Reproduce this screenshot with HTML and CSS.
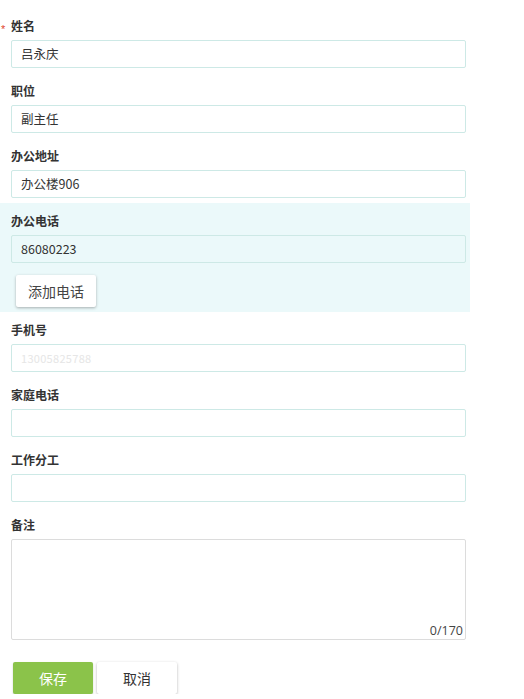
FILE: index.html
```html
<!DOCTYPE html>
<html>
<head>
<meta charset="utf-8">
<link rel="stylesheet" href="styles.css">
</head>
<body>
<form class="form">
  <div class="field">
    <label class="label required">姓名</label>
    <div class="input">吕永庆</div>
  </div>
  <div class="field">
    <label class="label">职位</label>
    <div class="input">副主任</div>
  </div>
  <div class="field">
    <label class="label">办公地址</label>
    <div class="input">办公楼906</div>
  </div>
  <div class="panel">
    <label class="label">办公电话</label>
    <div class="input input-panel">86080223</div>
    <button type="button" class="btn btn-add">添加电话</button>
  </div>
  <div class="field">
    <label class="label">手机号</label>
    <div class="input input-blur">13005825788</div>
  </div>
  <div class="field">
    <label class="label">家庭电话</label>
    <div class="input"></div>
  </div>
  <div class="field">
    <label class="label">工作分工</label>
    <div class="input"></div>
  </div>
  <div class="field">
    <label class="label">备注</label>
    <div class="textarea-wrap">
      <div class="textarea"></div>
      <span class="counter">0/170</span>
    </div>
  </div>
  <div class="actions">
    <button type="button" class="btn btn-save">保存</button>
    <button type="button" class="btn btn-cancel">取消</button>
  </div>
</form>
</body>
</html>
```
FILE: styles.css
```css
* { box-sizing: border-box; }
body {
  margin: 0;
  background: #fff;
  font-family: "Noto Sans CJK SC", "Noto Sans", sans-serif;
  color: #333;
}
.form {
  width: 470px;
  padding-top: 17px;
  display: flex;
  flex-direction: column;
}
.field {
  display: flex;
  flex-direction: column;
  padding: 0 4px 14px 11px;
}
.label {
  position: relative;
  display: block;
  height: 18px;
  line-height: 18px;
  font-size: 12px;
  font-weight: bold;
  color: #333;
  margin-bottom: 5px;
}
.required::before {
  content: "*";
  position: absolute;
  left: -10px;
  top: 3px;
  color: #e0442e;
  font-size: 11px;
  font-weight: normal;
  font-family: "Liberation Sans", sans-serif;
}
.input {
  height: 28px;
  border: 1px solid #cde9e6;
  border-radius: 2px;
  background: #fff;
  padding: 0 9px;
  font-size: 12.5px;
  line-height: 26px;
  color: #333;
}
.input-panel { background: #ebf9fa; }
.input-blur {
  color: #e6e6e6;
  font-size: 11px;
  letter-spacing: 0.3px;
}
.panel {
  background: #ebf9fa;
  margin-top: -9px;
  padding: 9px 4px 5px 11px;
  margin-bottom: 9px;
  display: flex;
  flex-direction: column;
}
.btn {
  height: 32px;
  width: 80px;
  border: none;
  border-radius: 2px;
  font-family: "Noto Sans CJK SC", "Noto Sans", sans-serif;
  font-size: 14px;
  cursor: pointer;
}
.btn-add {
  margin: 12px 0 0 5px;
  background: #fff;
  color: #444;
  box-shadow: 0 1px 3px rgba(0, 0, 0, 0.3);
}
.textarea-wrap {
  position: relative;
}
.textarea {
  height: 101px;
  border: 1px solid #dcdcdc;
  border-radius: 2px;
  background: #fff;
}
.counter {
  position: absolute;
  right: 3px;
  bottom: 1px;
  font-family: "Open Sans", "Liberation Sans", sans-serif;
  font-size: 12.5px;
  color: #444;
}
.actions {
  display: flex;
  gap: 4px;
  padding: 8px 0 0 13px;
}
.btn-save {
  background: #8bc34a;
  color: #fff;
  box-shadow: 0 1px 2px rgba(0, 0, 0, 0.2);
}
.btn-cancel {
  background: #fff;
  color: #333;
  box-shadow: 0 1px 3px rgba(0, 0, 0, 0.3);
}
```
